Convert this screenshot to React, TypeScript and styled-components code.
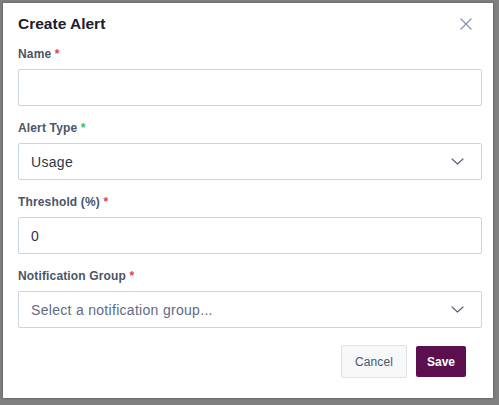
import React from 'react'
import styled, { createGlobalStyle } from 'styled-components'

const GlobalStyle = createGlobalStyle`
  html, body {
    margin: 0;
    padding: 0;
    background: #808080;
  }
  body {
    font-family: "Liberation Sans", Arial, sans-serif;
  }
`;

interface FieldDef {
  label: string;
  kind: 'input' | 'select';
  value?: string;
  placeholder?: string;
  starColor: string;
}

const fields: FieldDef[] = [
  { label: 'Name', kind: 'input', starColor: '#e53e3e' },
  { label: 'Alert Type', kind: 'select', value: 'Usage', starColor: '#38c172' },
  { label: 'Threshold (%)', kind: 'input', value: '0', starColor: '#e53e3e' },
  { label: 'Notification Group', kind: 'select', placeholder: 'Select a notification group...', starColor: '#e53e3e' },
];

function Chevron() {
  return (
    <svg width="13" height="7" viewBox="0 0 13 7" fill="none">
      <path d="M1 1l5.5 5 5.5-5" stroke="#5a6577" strokeWidth="1.2" strokeLinecap="round" strokeLinejoin="round" />
    </svg>
  );
}

function CloseIcon() {
  return (
    <svg width="12" height="12" viewBox="0 0 12 12" fill="none">
      <path d="M1 1l10 10M11 1L1 11" stroke="#8795ab" strokeWidth="1.3" strokeLinecap="round" />
    </svg>
  );
}

export default function App() {
  return (
    <>
      <GlobalStyle />
      <Dialog>
        <Header>
          <Title>Create Alert</Title>
          <CloseButton type="button" aria-label="Close">
            <CloseIcon />
          </CloseButton>
        </Header>
        <Form>
          {fields.map((f) => (
            <Field key={f.label}>
              <Label>
                {f.label} <Star $color={f.starColor}>*</Star>
              </Label>
              <Box>
                <BoxText $placeholder={!f.value}>{f.value ?? f.placeholder ?? ''}</BoxText>
                {f.kind === 'select' ? <Chevron /> : null}
              </Box>
            </Field>
          ))}
        </Form>
        <Footer>
          <CancelButton type="button">Cancel</CancelButton>
          <SaveButton type="button">Save</SaveButton>
        </Footer>
      </Dialog>
    </>
  );
}

const Dialog = styled.div`
  margin: 3px;
  width: 490px;
  height: 395px;
  box-sizing: border-box;
  background: #ffffff;
  box-shadow: 0 0 3px rgba(0, 0, 0, 0.35);
  padding: 9px 11px 0 15px;
  display: flex;
  flex-direction: column;
`;

const Header = styled.div`
  display: flex;
  align-items: center;
  justify-content: space-between;
  height: 24px;
`;

const Title = styled.h2`
  margin: 0;
  font-size: 15.5px;
  font-weight: 700;
  color: #1a202c;
  line-height: 24px;
`;

const CloseButton = styled.button`
  border: none;
  background: none;
  padding: 0;
  margin-right: 10px;
  display: flex;
  align-items: center;
  justify-content: center;
  cursor: pointer;
`;

const Form = styled.div`
  display: flex;
  flex-direction: column;
  gap: 14px;
  margin-top: 10px;
`;

const Field = styled.div`
  display: flex;
  flex-direction: column;
  gap: 7px;
`;

const Label = styled.label`
  font-size: 12px;
  font-weight: 700;
  line-height: 16px;
  letter-spacing: 0.15px;
  color: #4a5568;
`;

const Star = styled.span<{ $color: string }>`
  color: ${(p) => p.$color};
`;

const Box = styled.div`
  height: 37px;
  box-sizing: border-box;
  border: 1px solid #cbd5e0;
  border-radius: 2px;
  padding: 0 17px 0 12px;
  display: flex;
  align-items: center;
  justify-content: space-between;
`;

const BoxText = styled.span<{ $placeholder: boolean }>`
  font-size: 14px;
  letter-spacing: 0.3px;
  color: ${(p) => (p.$placeholder ? '#5f6b7e' : '#2d3748')};
`;

const Footer = styled.div`
  display: flex;
  justify-content: flex-end;
  align-items: center;
  gap: 9px;
  margin-top: 17px;
  padding-right: 16px;
`;

const CancelButton = styled.button`
  height: 33px;
  padding: 0 13px;
  border: 1px solid #dde3ea;
  border-radius: 2px;
  background: #f6f8fa;
  font-family: inherit;
  font-size: 12px;
  letter-spacing: 0.1px;
  color: #4a5568;
  cursor: pointer;
`;

const SaveButton = styled.button`
  height: 31px;
  padding: 0 11px;
  border: none;
  border-radius: 2px;
  background: #5c0f4f;
  font-family: inherit;
  font-size: 12px;
  font-weight: 700;
  color: #ffffff;
  cursor: pointer;
`;
